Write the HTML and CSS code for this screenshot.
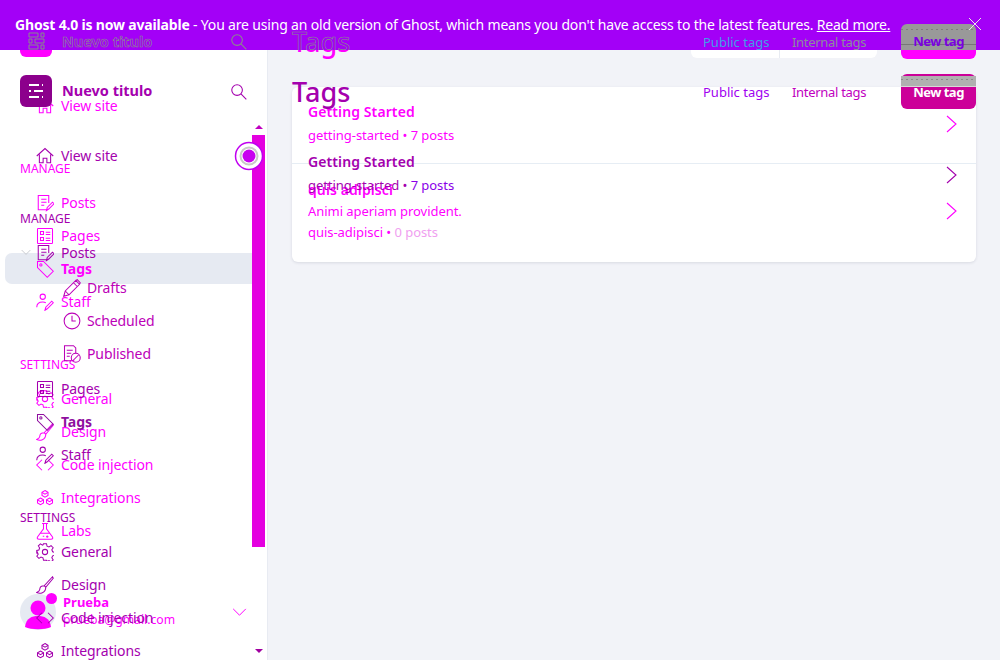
FILE: index.html
```html
<!DOCTYPE html>
<html lang="en">
<head>
    <meta charset="UTF-8">
    <title>Tags - Nuevo titulo</title>
    <link rel="stylesheet" href="styles.css">
</head>
<body>
<svg class="sprite" xmlns="http://www.w3.org/2000/svg">
    <symbol id="i-logo" viewBox="0 0 32 32"><path d="M9 10h10M22 10h1M9 16h2M14 16h9M9 22h10M22 22h1" fill="none" stroke="#fff" stroke-width="2.2"/></symbol>
    <symbol id="i-logo-ghost" viewBox="0 0 32 32"><path d="M9 8h9v4H9zM21 8h3v4h-3zM9 14h3v4H9zM15 14h9v4h-9zM9 20h9v4H9zM21 20h3v4h-3z" fill="none" stroke="currentColor" stroke-width="1"/></symbol>
    <symbol id="i-search" viewBox="0 0 24 24"><circle cx="10" cy="10" r="7.5"/><path d="M15.5 15.5 23 23"/></symbol>
    <symbol id="i-home" viewBox="0 0 24 24"><path d="M1 12 12 2l11 10M4.5 10v11h5v-6h5v6h5V10"/></symbol>
    <symbol id="i-posts" viewBox="0 0 24 24"><path d="M14 21H3V2h14v10M7 7h7M7 11h7M7 15h4M14 22l1-4 7-7 2 2-7 7z"/></symbol>
    <symbol id="i-pages" viewBox="0 0 24 24"><rect x="2" y="2" width="20" height="20" rx="1"/><path d="M6 6h4v4H6zM6 14h4v4H6zM13 7h6M13 10h6M13 15h6M13 18h6"/></symbol>
    <symbol id="i-tag" viewBox="0 0 24 24"><path d="M2 2h8l13 13-8 8L2 10z"/><circle cx="6.500" cy="6.500" r="1.500"/></symbol>
    <symbol id="i-staff" viewBox="0 0 24 24"><circle cx="9" cy="5" r="3.500"/><path d="M1 19c0-5 3-7 8-7 1.500 0 3 .3 4 1M12 23l1-4 8-8 2 2-8 8z"/></symbol>
    <symbol id="i-gear" viewBox="0 0 24 24"><circle cx="12" cy="12" r="3.500"/><path d="M10 1h4l.7 3.200 2.600 1.100 2.800-1.800 2.800 2.800-1.800 2.800 1.100 2.600 2.800.7v4l-2.800.7-1.100 2.600 1.800 2.800-2.800 2.800-2.800-1.800-2.600 1.100L14 23h-4l-.7-3.200-2.600-1.100-2.800 1.800-2.800-2.800 1.800-2.800-1.100-2.600L1 14v-4l2.800-.7 1.100-2.600L3.100 3.900 5.900 1.100l2.800 1.800 .6-.3z"/></symbol>
    <symbol id="i-brush" viewBox="0 0 24 24"><path d="M22 1 11 13l2 2L23 3zM11 13c-4 0-6 2-6 5 0 2-2 3-4 4 4 2 12 1 12-7"/></symbol>
    <symbol id="i-code" viewBox="0 0 24 24"><path d="M8 5 1 12l7 7M16 5l7 7-7 7"/></symbol>
    <symbol id="i-hex" viewBox="0 0 24 24"><path d="M12 2l4 2.300v4.400L12 11 8 8.700V4.300zM6 12l4 2.300v4.400L6 21l-4-2.300v-4.400zM18 12l4 2.300v4.400L18 21l-4-2.300v-4.400z"/><path d="M8 4.500l4 2.300 4-2.300M2 14.500l4 2.300 4-2.300M14 14.500l4 2.300 4-2.300"/></symbol>
    <symbol id="i-flask" viewBox="0 0 24 24"><path d="M8 2h8M10 2v7L2 20c-1 2 0 3 2 3h16c2 0 3-1 2-3L14 9V2M6 15h12M9 19h2M15 18v3M13.500 19.500h3"/></symbol>
    <symbol id="i-pencil" viewBox="0 0 24 24"><path d="M1 23l2-7L17 2l5 5L8 21zM3 16l5 5M14 5l5 5M17 2l2-1 4 4-1 2"/></symbol>
    <symbol id="i-clock" viewBox="0 0 24 24"><circle cx="12" cy="12" r="10.500"/><path d="M12 5v7h5"/></symbol>
    <symbol id="i-published" viewBox="0 0 24 24"><path d="M11 21H2V1h12l3 3v7M5 7h8M5 11h6M5 15h4"/><circle cx="17" cy="17" r="6"/><path d="m13 21 8-8"/></symbol>
    <symbol id="i-chev-right" viewBox="0 0 12 18"><path d="M1 1l9 8-9 8"/></symbol>
    <symbol id="i-chev-down" viewBox="0 0 16 10"><path d="M1 1l7 7 7-7"/></symbol>
</svg>

<div class="stage">
    <!-- bright layer -->
    <div class="layer under">
        <aside class="sidebar">
            <div class="brand">
                <div class="logo"><svg><use href="#i-logo"/></svg></div>
                <b>Nuevo titulo</b>
                <svg class="search-icon"><use href="#i-search"/></svg>
            </div>
            <a class="nav-item first"><svg><use href="#i-home"/></svg>View site</a>
            <div class="nav-label">Manage</div>
            <a class="nav-item"><svg><use href="#i-posts"/></svg>Posts</a>
            <a class="nav-item"><svg><use href="#i-pages"/></svg>Pages</a>
            <a class="nav-item active"><svg><use href="#i-tag"/></svg>Tags</a>
            <a class="nav-item"><svg><use href="#i-staff"/></svg>Staff</a>
            <div class="nav-label">Settings</div>
            <a class="nav-item"><svg><use href="#i-gear"/></svg>General</a>
            <a class="nav-item"><svg><use href="#i-brush"/></svg>Design</a>
            <a class="nav-item"><svg><use href="#i-code"/></svg>Code injection</a>
            <a class="nav-item"><svg><use href="#i-hex"/></svg>Integrations</a>
            <a class="nav-item"><svg><use href="#i-flask"/></svg>Labs</a>
            <div class="user">
                <div class="avatar">
                    <svg viewBox="0 0 36 36"><circle cx="18" cy="14" r="7.500"/><path d="M5 33c1-9 7-11 13-11s12 2 13 11c-6 3-20 3-26 0z"/></svg>
                    <span class="avatar-dot"></span>
                </div>
                <div class="user-info">
                    <b>Prueba</b>
                    <span>prueba@gmail.com</span>
                </div>
                <svg class="user-chev"><use href="#i-chev-down"/></svg>
            </div>
        </aside>
        <main class="content">
            <header class="page-head">
                <h1>Tags</h1>
                <div class="tabs">
                    <a>Public tags</a>
                    <a>Internal tags</a>
                </div>
                <button class="new-tag">New tag</button>
            </header>
            <section class="card">
                <div class="tag-row row-one">
                    <div>
                        <h3>Getting Started</h3>
                        <p>getting-started • 7 posts</p>
                    </div>
                    <svg class="row-chev"><use href="#i-chev-right"/></svg>
                </div>
                <div class="tag-row row-two">
                    <div>
                        <h3>quis adipisci</h3>
                        <p class="tag-desc">Animi aperiam provident.</p>
                        <p>quis-adipisci • <span class="faded">0 posts</span></p>
                    </div>
                    <svg class="row-chev"><use href="#i-chev-right"/></svg>
                </div>
            </section>
        </main>
    </div>

    <!-- dark layer, same page 50px lower -->
    <div class="layer over">
        <aside class="sidebar">
            <div class="brand">
                <div class="logo"><svg><use href="#i-logo"/></svg></div>
                <b>Nuevo titulo</b>
                <svg class="search-icon"><use href="#i-search"/></svg>
            </div>
            <a class="nav-item first"><svg><use href="#i-home"/></svg>View site</a>
            <div class="nav-label">Manage</div>
            <a class="nav-item parent"><svg class="posts-chev"><use href="#i-chev-down"/></svg><svg><use href="#i-posts"/></svg>Posts</a>
            <div class="sub-nav">
                <a class="nav-item sub"><svg><use href="#i-pencil"/></svg>Drafts</a>
                <a class="nav-item sub"><svg><use href="#i-clock"/></svg>Scheduled</a>
                <a class="nav-item sub"><svg><use href="#i-published"/></svg>Published</a>
            </div>
            <a class="nav-item"><svg><use href="#i-pages"/></svg>Pages</a>
            <a class="nav-item current"><svg><use href="#i-tag"/></svg>Tags</a>
            <a class="nav-item"><svg><use href="#i-staff"/></svg>Staff</a>
            <div class="nav-label">Settings</div>
            <a class="nav-item"><svg><use href="#i-gear"/></svg>General</a>
            <a class="nav-item"><svg><use href="#i-brush"/></svg>Design</a>
            <a class="nav-item"><svg><use href="#i-code"/></svg>Code injection</a>
            <a class="nav-item"><svg><use href="#i-hex"/></svg>Integrations</a>
            <div class="scrollbar">
                <span class="arrow-up"></span>
                <span class="thumb"></span>
                <span class="arrow-down"></span>
            </div>
            <svg class="spinner" viewBox="0 0 30 30">
                <circle class="ring-outer" cx="15" cy="15" r="13.500"/>
                <circle class="ring-inner" cx="15" cy="15" r="8.500"/>
                <circle class="ring-dot" cx="15" cy="15" r="6.500"/>
            </svg>
        </aside>
        <main class="content">
            <header class="page-head">
                <h1>Tags</h1>
                <div class="tabs">
                    <a class="tab-on">Public tags</a>
                    <a>Internal tags</a>
                </div>
                <button class="new-tag"><span class="btn-band"></span>New tag</button>
            </header>
            <section class="card">
                <div class="tag-row row-one">
                    <div>
                        <h3>Getting Started</h3>
                        <p>getting-started • <span class="count">7 posts</span></p>
                    </div>
                    <svg class="row-chev"><use href="#i-chev-right"/></svg>
                </div>
            </section>
        </main>
    </div>

    <div class="banner">
        <div class="ghost">
            <div class="ghost-brand">
                <svg class="ghost-logo"><use href="#i-logo-ghost"/></svg>
                <span class="ghost-title">Nuevo titulo</span>
                <svg class="search-icon"><use href="#i-search"/></svg>
            </div>
            <div class="ghost-head">
                <span class="ghost-h1">Tags</span>
                <div class="tabs">
                    <a class="ghost-on">Public tags</a>
                    <a>Internal tags</a>
                </div>
                <div class="ghost-btn">New tag</div>
            </div>
        </div>
        <div class="banner-text">
            <b>Ghost 4.0 is now available</b> - You are using an old version of Ghost, which means you don't have access to the latest features. <a>Read more.</a>
        </div>
        <span class="banner-close">
            <svg viewBox="0 0 12 12"><path d="M0 0l12 12M12 0 0 12"/></svg>
        </span>
    </div>
</div>
</body>
</html>
```

FILE: styles.css
```css
* {
  box-sizing: border-box;
}

body {
  margin: 0;
  font-family: "Noto Sans", "Open Sans", sans-serif;
  font-size: 14px;
  background: #f2f3f8;
  overflow: hidden;
}

.sprite {
  display: none;
}

svg {
  fill: none;
  stroke: currentColor;
  stroke-width: 1.5;
}

.stage {
  display: grid;
  width: 1000px;
  height: 660px;
  overflow: hidden;
}

.layer,
.banner {
  grid-area: 1 / 1;
}

.layer {
  display: flex;
  height: 660px;
  overflow: hidden;
}

.under {
  color: #ff00ff;
}

.over {
  color: #a400ae;
  padding-top: 50px;
}

/* sidebar */
.sidebar {
  position: relative;
  flex: none;
  width: 268px;
  height: 660px;
  padding-top: 25px;
}

.under .sidebar {
  background: #fff;
  border-right: 1px solid #e8ebf2;
}

.brand {
  display: flex;
  align-items: center;
  height: 32px;
  padding-left: 20px;
  font-size: 14.500px;
}

.brand b {
  margin-bottom: 2px;
}

.logo {
  width: 32px;
  height: 32px;
  border-radius: 6px;
  background: #ff00ff;
  margin-right: 10px;
}

.over .logo {
  background: #8c008c;
}

.logo svg {
  display: block;
  width: 32px;
  height: 32px;
}

.search-icon {
  width: 17px;
  height: 17px;
  margin-left: auto;
  margin-right: 21px;
}

.nav-item {
  display: flex;
  align-items: center;
  gap: 7px;
  height: 31px;
  margin: 2px 4px 0 5px;
  padding-left: 31px;
  line-height: 31px;
  letter-spacing: -.1px;
}

.nav-item svg {
  flex: none;
  width: 18px;
  height: 18px;
  stroke-width: 1.4;
}

.nav-item.first {
  margin-top: 33px;
}

.nav-label {
  height: 16px;
  margin: 40px 0 10px 20px;
  font-size: 12px;
  line-height: 16px;
  text-transform: uppercase;
}

.under .nav-item.active {
  border: 2px solid transparent;
  border-right-color: #c6c9d0;
  border-radius: 7px;
  background: #e6eaf2;
  padding-left: 29px;
  font-weight: 700;
}

.nav-item.current {
  font-weight: 700;
  color: #8f0f9f;
}

.nav-item.parent {
  padding-left: 16px;
}

.nav-item .posts-chev {
  width: 10px;
  height: 7px;
  margin-right: -2px;
  color: #c4c6cc;
}

.sub-nav {
  padding: 2px 0;
  color: #bc00b8;
}

.nav-item.sub {
  padding-left: 58px;
  gap: 6px;
}

/* user box */
.user {
  display: flex;
  align-items: center;
  margin-top: 48px;
  padding: 0 20px;
}

.avatar {
  position: relative;
  flex: none;
  width: 36px;
  height: 36px;
  border-radius: 50%;
  background: #e6eaf2;
}

.avatar svg {
  display: block;
  fill: #ff00ff;
  stroke: none;
}

.avatar-dot {
  position: absolute;
  top: -1px;
  right: -1px;
  width: 11px;
  height: 11px;
  border-radius: 50%;
  background: #ff00ff;
}

.user-info {
  display: flex;
  flex-direction: column;
  margin: -2px 0 0 7px;
  line-height: 17px;
  font-size: 12.200px;
}

.user-info b {
  font-size: 13px;
}

.user-chev {
  width: 15px;
  height: 9px;
  margin-left: auto;
  stroke-width: 1.1;
}

/* scrollbar + spinner sit on top of the nav */
.scrollbar {
  position: absolute;
  top: 73px;
  left: 252px;
  width: 13px;
  height: 537px;
  display: flex;
  flex-direction: column;
  align-items: center;
}

.arrow-up,
.arrow-down {
  width: 0;
  height: 0;
  border-left: 4px solid transparent;
  border-right: 4px solid transparent;
}

.arrow-up {
  border-bottom: 4px solid #c000c0;
  margin-top: 2px;
}

.arrow-down {
  border-top: 4px solid #a000a0;
  margin-top: 102px;
}

.thumb {
  width: 13px;
  height: 412px;
  margin-top: 6px;
  background: #e400e0;
}

.spinner {
  position: absolute;
  top: 91px;
  left: 234px;
  width: 30px;
  height: 30px;
}

.ring-outer {
  fill: #fff;
  stroke: #c000f0;
  stroke-width: 1.5;
}

.ring-inner {
  fill: none;
  stroke: #c9c9c9;
  stroke-width: 2;
}

.ring-dot {
  fill: #c800f0;
  stroke: none;
}

/* main */
.content {
  flex: 1;
  padding: 24px 24px 0;
}

.page-head {
  display: flex;
  align-items: center;
  height: 35px;
}

h1 {
  margin: 0;
  font-size: 27px;
  font-weight: 500;
  line-height: 35px;
}

.tabs {
  display: flex;
  margin-left: auto;
  margin-right: 24px;
  width: 186px;
  height: 33px;
  line-height: 35px;
  font-size: 13px;
  white-space: nowrap;
}

.tabs a {
  flex: none;
  padding-left: 12px;
  width: 89px;
}

.tabs a + a {
  letter-spacing: -.3px;
}

.under .tabs {
  background: #fff;
  border-radius: 6px;
}

.under .tabs a:first-child {
  border-right: 1px solid #e8ebf2;
}

.over .tabs {
  color: #c000c0;
}

.over .tab-on {
  color: #a000f0;
}

.new-tag {
  position: relative;
  width: 75px;
  height: 35px;
  padding: 0;
  border: 0;
  border-radius: 6px;
  background: #ff00ff;
  color: #fff;
  font-family: inherit;
  font-size: 13px;
  font-weight: 700;
  letter-spacing: -.5px;
}

.over .new-tag {
  background: #cc0099;
}

.btn-band {
  position: absolute;
  top: 2px;
  left: 0;
  right: 0;
  height: 11px;
  background: repeating-linear-gradient(90deg, #8a8a8a 0 2px, #b0b0b0 2px 5px) 0 3px / 100% 1px no-repeat, #b0b0b0;
  border-bottom: 1px solid #d8d8d8;
}

.card {
  margin-top: 28px;
  border-radius: 6px;
}

.under .card {
  background: #fff;
  box-shadow: 0 1px 3px rgba(30, 40, 70, .12);
}

.tag-row {
  display: flex;
  align-items: center;
  justify-content: space-between;
  padding: 0 18px 4px 16px;
}

.row-one {
  height: 77px;
  border-bottom: 1px solid #e6edf4;
}

.row-one .row-chev {
  margin-top: 2px;
}

.over .row-one {
  border-bottom: 0;
}

.row-two {
  height: 98px;
}

h3 {
  margin: 0;
  font-size: 14px;
  font-weight: 600;
  letter-spacing: .1px;
  line-height: 20px;
}

.tag-row p {
  margin: 3px 0 0;
  font-size: 13px;
  letter-spacing: -.05px;
  line-height: 20px;
}

.row-two p {
  margin-top: 1px;
}

.row-chev {
  width: 12px;
  height: 18px;
  stroke-width: 1.1;
}

.faded {
  color: #f0a0f0;
}

.count {
  color: #8a00e8;
}

/* banner */
.banner {
  position: relative;
  z-index: 2;
  height: 50px;
  overflow: hidden;
  background: #a300f7;
  color: #fff;
}

.ghost {
  display: flex;
  height: 50px;
  padding-top: 24px;
  color: #8a8a8a;
}

.ghost-brand {
  display: flex;
  align-items: center;
  width: 268px;
  height: 34px;
  padding-left: 20px;
  font-size: 14.500px;
}

.ghost-logo {
  width: 32px;
  height: 32px;
  margin-right: 10px;
}

.ghost-title,
.ghost-h1 {
  color: transparent;
  -webkit-text-stroke: .6px #8a8f8a;
  font-weight: 700;
}

.ghost-head {
  flex: 1;
  display: flex;
  align-items: center;
  height: 35px;
  padding: 0 24px;
}

.ghost-h1 {
  font-size: 27px;
  font-weight: 500;
}

.ghost-head .tabs {
  color: #8c8c9c;
}

.ghost-on {
  color: #3f9fe8;
}

.ghost-btn {
  flex: none;
  width: 75px;
  height: 35px;
  border-radius: 6px;
  background:
    repeating-linear-gradient(90deg, #7f7f7f 0 2px, #999 2px 5px) 0 5px / 100% 1px no-repeat,
    linear-gradient(#777, #777) 0 20px / 100% 1px no-repeat,
    #999;
  color: #7a00e0;
  font-size: 13px;
  font-weight: 700;
  letter-spacing: -.5px;
  line-height: 35px;
  text-align: center;
}

.banner-text {
  position: absolute;
  top: 0;
  left: 15px;
  font-size: 14px;
  letter-spacing: -.18px;
  line-height: 50px;
  white-space: nowrap;
}

.banner-text a {
  text-decoration: underline;
}

.banner-close {
  position: absolute;
  top: 18px;
  left: 969px;
  width: 12px;
  height: 12px;
}

.banner-close svg {
  display: block;
  stroke-width: 1;
  color: #e8e8e8;
}
```
